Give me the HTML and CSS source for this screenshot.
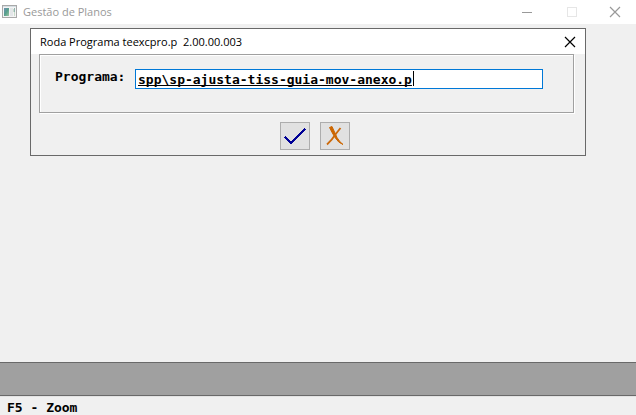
FILE: index.html
```html
<!DOCTYPE html>
<html lang="pt-BR">
<head>
<meta charset="utf-8">
<title>Gestão de Planos</title>
<link rel="stylesheet" href="styles.css">
</head>
<body>
<header class="titlebar">
  <svg class="app-icon" width="16" height="14" viewBox="0 0 16 14" shape-rendering="crispEdges" aria-hidden="true">
    <defs>
      <linearGradient id="pane" x1="0" y1="0" x2="1" y2="1">
        <stop offset="0" stop-color="#6f8fb4"/>
        <stop offset=".5" stop-color="#57a08c"/>
        <stop offset="1" stop-color="#9fc6a4"/>
      </linearGradient>
    </defs>
    <path fill="#a9a9a9" d="M0 0h15v13H0z"/>
    <path fill="#f4f4f4" d="M1 1h13v1H1zM1 2h13v10H1z"/>
    <path fill="#d4dde2" d="M1 1h13v1H1z"/>
    <path fill="url(#pane)" d="M2 3h5v8H2z"/>
    <path fill="#e3e6e8" d="M8 3h3v8H8z"/>
    <path fill="#8fb3b0" d="M12 3h1v4h-1z"/>
    <path fill="#c9dccb" d="M12 7h1v4h-1zM11 4h1v3h-1z"/>
  </svg>
  <h1 class="app-title">Gestão de Planos</h1>
  <div class="window-controls">
    <button class="window-button" type="button" aria-label="Minimizar">
      <svg width="10" height="10" shape-rendering="crispEdges"><path d="M0 5.500h10" stroke="#999"/></svg>
    </button>
    <button class="window-button" type="button" aria-label="Maximizar" disabled>
      <svg width="10" height="10" shape-rendering="crispEdges"><path d="M.5.5h9v9h-9z" fill="none" stroke="#e6e6e6"/></svg>
    </button>
    <button class="window-button" type="button" aria-label="Fechar">
      <svg width="10" height="10"><path d="M0 0l10 10M10 0L0 10" stroke="#999" stroke-width="1.200"/></svg>
    </button>
  </div>
</header>
<main class="workspace">
  <section class="dialog" role="dialog" aria-labelledby="dialog-title">
    <header class="dialog-header">
      <h2 class="dialog-title" id="dialog-title">Roda Programa teexcpro.p&nbsp; 2.00.00.003</h2>
      <button class="dialog-close" type="button" aria-label="Fechar diálogo">
        <svg width="10" height="10"><path d="M0 0l10 10M10 0L0 10" stroke="#000" stroke-width="1.200"/></svg>
      </button>
    </header>
    <form class="dialog-form">
      <div class="frame">
        <label class="field-label" for="program">Programa:</label>
        <div class="field">
          <input class="field-input" id="program" type="text" size="35" value="spp\sp-ajusta-tiss-guia-mov-anexo.p" spellcheck="false" autocomplete="off">
          <span class="caret"></span>
        </div>
      </div>
      <div class="actions">
        <button class="action" type="button" aria-label="Confirmar">
          <svg width="20" height="16" viewBox="0 0 20 16" shape-rendering="crispEdges"><path d="M0 9l6 6L20 1" fill="none" stroke="#000096" stroke-width="2"/></svg>
        </button>
        <button class="action" type="button" aria-label="Cancelar">
          <svg width="18" height="20" viewBox="0 0 18 20">
            <path d="M3.500 1.500L6 .5Q8.500 6 11 11.500Q13.500 16 17 18.500Q12.500 17 9 11.500Q6.500 7.500 3.500 1.500z" fill="#cc6600" stroke="#cc6600" stroke-width="1"/>
            <path d="M14.500 2L9 9Q6 14 1 18.500" fill="none" stroke="#cc6a0c" stroke-width="1.800"/>
          </svg>
        </button>
      </div>
    </form>
  </section>
</main>
<div class="message-area"></div>
<footer class="statusbar">F5 - Zoom</footer>
</body>
</html>
```
FILE: styles.css
```css
* {
  box-sizing: border-box;
}

body {
  display: flex;
  flex-direction: column;
  min-height: 100vh;
  margin: 0;
  background: #f0f0f0;
  color: #000;
  font: 11px/16px "Open Sans", "Noto Sans", sans-serif;
}

h1,
h2 {
  margin: 0;
  font: inherit;
}

button {
  display: flex;
  align-items: center;
  justify-content: center;
  padding: 0;
  border: 0;
  background: none;
}

svg {
  display: block;
  overflow: visible;
}

.titlebar {
  display: flex;
  align-items: center;
  height: 24px;
  padding-left: 2px;
  background: #fff;
  color: #999;
}

.app-icon {
  margin-right: 5px;
}

.window-controls {
  display: flex;
  margin-left: auto;
}

.window-button {
  width: 45px;
  height: 22px;
}

.window-button:last-child {
  width: 42px;
}

.workspace {
  flex: 1;
  padding: 4px 50px 0 30px;
}

.dialog {
  border: 1px solid #696969;
}

.dialog-header {
  display: flex;
  align-items: center;
  justify-content: space-between;
  height: 25px;
  padding: 0 10px 0 9px;
  background: #fff;
}

.dialog-form {
  padding: 0 11px 5px 8px;
}

.frame {
  display: flex;
  align-items: flex-start;
  height: 59px;
  padding: 14px 30px 0 15px;
  border: 1px solid #a0a0a0;
  box-shadow: 1px 1px #fff, inset 1px 1px #fff;
}

.field-label,
.field,
.field-input,
.statusbar {
  font: bold 13px/16px "DejaVu Sans Mono", "Liberation Mono", monospace;
}

.field-label {
  width: 72px;
}

.field {
  display: flex;
  flex: 1;
  margin-left: 8px;
  position: relative;
}

.field-input {
  width: 100%;
  height: 20px;
  padding: 0 2px;
  border: 1px solid #0078d7;
  border-radius: 0;
  outline: 0;
  background: #fff;
  color: #000;
  text-decoration: underline;
  text-decoration-skip-ink: none;
}

.caret {
  position: absolute;
  top: 2px;
  left: calc(35ch + 4px);
  width: 1px;
  height: 15px;
  background: #000;
}

.actions {
  display: flex;
  justify-content: center;
  gap: 10px;
  padding: 9px 0 0 16px;
}

.action {
  width: 30px;
  height: 28px;
  border: 1px solid #adadad;
  background: #e1e1e1;
}

.message-area {
  height: 34px;
  border-top: 1px solid #696969;
  border-bottom: 1px solid #696969;
  background: #a0a0a0;
}

.statusbar {
  height: 19px;
  padding: 3px 7px 0;
  border-top: 1px solid #e3e3e3;
}
```
